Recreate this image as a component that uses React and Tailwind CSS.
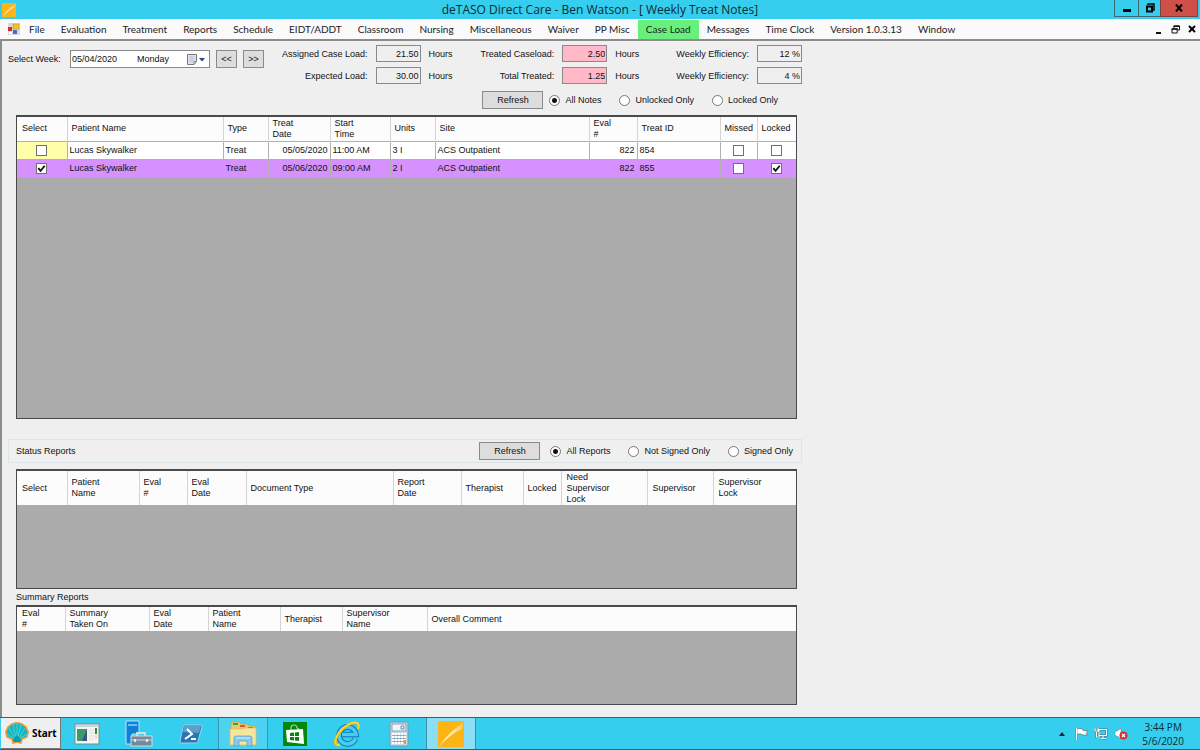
import { useState } from "react";

const menuItems = [
  "File",
  "Evaluation",
  "Treatment",
  "Reports",
  "Schedule",
  "EIDT/ADDT",
  "Classroom",
  "Nursing",
  "Miscellaneous",
  "Waiver",
  "PP Misc",
  "Case Load",
  "Messages",
  "Time Clock",
  "Version 1.0.3.13",
  "Window",
];

const treatColumns = [
  { label: "Select", width: 50 },
  { label: "Patient Name", width: 156 },
  { label: "Type", width: 45 },
  { label: "Treat\nDate", width: 62 },
  { label: "Start\nTime", width: 60 },
  { label: "Units", width: 45 },
  { label: "Site", width: 154 },
  { label: "Eval\n#", width: 48 },
  { label: "Treat ID", width: 83 },
  { label: "Missed", width: 37 },
  { label: "Locked", width: 39 },
];

const statusColumns = [
  { label: "Select", width: 50 },
  { label: "Patient\nName", width: 72 },
  { label: "Eval\n#", width: 48 },
  { label: "Eval\nDate", width: 59 },
  { label: "Document Type", width: 147 },
  { label: "Report\nDate", width: 68 },
  { label: "Therapist", width: 62 },
  { label: "Locked", width: 39 },
  { label: "Need\nSupervisor\nLock", width: 86 },
  { label: "Supervisor", width: 66 },
  { label: "Supervisor\nLock", width: 82 },
];

const summaryColumns = [
  { label: "Eval\n#", width: 48 },
  { label: "Summary\nTaken On", width: 84 },
  { label: "Eval\nDate", width: 59 },
  { label: "Patient\nName", width: 72 },
  { label: "Therapist", width: 62 },
  { label: "Supervisor\nName", width: 85 },
  { label: "Overall Comment", width: 369 },
];

const treatNotes = [
  { name: "Lucas Skywalker", date: "05/05/2020", time: "11:00 AM", units: "3 I", evalNo: 822, id: 854, selected: false, locked: false },
  { name: "Lucas Skywalker", date: "05/06/2020", time: "09:00 AM", units: "2 I", evalNo: 822, id: 855, selected: true, locked: true },
];

function OrangeLogo({ className }) {
  return (
    <svg viewBox="0 0 26 26" className={className}>
      <defs>
        <linearGradient id="streak" x1="0" y1="1" x2="1" y2="0">
          <stop offset="0" stopColor="#fff" />
          <stop offset="0.5" stopColor="#ffeab8" />
          <stop offset="1" stopColor="#fdc752" />
        </linearGradient>
      </defs>
      <rect width="26" height="26" fill="#fdb515" />
      <path d="M1 25C7 17 15 8 25 2l-1 6C15 12 8 18 1 25Z" fill="url(#streak)" />
    </svg>
  );
}

function Check({ label, defaultChecked }) {
  return (
    <span className="relative mx-auto block size-[11px]">
      <input
        type="checkbox"
        aria-label={label}
        defaultChecked={defaultChecked}
        className="peer block size-[11px] appearance-none border border-[#707070] bg-white"
      />
      <svg viewBox="0 0 12 12" className="pointer-events-none absolute inset-0 hidden size-[11px] peer-checked:block">
        <path d="M2.5 5.5 5 8.5 9.5 3" fill="none" stroke="#111" strokeWidth="2" />
      </svg>
    </span>
  );
}

function Radio({ name, label, value, onChange }) {
  return (
    <label className="flex items-center gap-[5px] whitespace-nowrap">
      <input
        type="radio"
        name={name}
        checked={value === label}
        onChange={() => onChange(label)}
        className="size-[11px] appearance-none rounded-full border border-[#777] bg-white checked:bg-[radial-gradient(circle,#111_2px,#fff_3px)]"
      />
      {label}
    </label>
  );
}

function RefreshButton() {
  return (
    <button className="h-[18px] w-[61px] border border-[#8a8a8a] bg-[#dddddd]">Refresh</button>
  );
}

function Stat({ id, label, value, unit, pink }) {
  return (
    <>
      <label htmlFor={id} className="pr-2 text-right whitespace-nowrap">{label}</label>
      <input
        id={id}
        readOnly
        value={value}
        className={`h-[17px] w-[45px] border border-[#8a8a8a] pr-px text-right ${pink ? "bg-[#ffb9c9]" : "bg-[#efefef]"}`}
      />
      {unit && <span className="pl-2">{unit}</span>}
    </>
  );
}

function DataGrid({ label, columns, headerClass, className, children }) {
  return (
    <div className={`border border-[#4a4a4a] border-t-2 bg-[#ababab] ${className}`}>
      <table aria-label={label} className="w-full table-fixed border-collapse">
        <colgroup>
          {columns.map((col, i) => (
            <col key={i} style={{ width: `${(col.width / 779) * 100}%` }} />
          ))}
        </colgroup>
        <thead>
          <tr className={`bg-[#fcfcfc] ${headerClass}`}>
            {columns.map((col, i) => (
              <th
                key={i}
                className="border-r border-[#d4d4d4] py-0 pr-0 pl-1 text-left align-middle font-normal whitespace-pre leading-[11px] first:pl-[5px] last:border-r-0"
              >
                {col.label}
              </th>
            ))}
          </tr>
        </thead>
        {children}
      </table>
    </div>
  );
}

function TitleBar() {
  return (
    <header className="flex h-[19px] items-start bg-[#35ceef]">
      <div className="flex flex-1 pt-[3px] pl-0.5">
        <OrangeLogo className="size-[14px]" />
      </div>
      <h1 className="font-['Open_Sans',sans-serif] text-[12px] leading-[19px] text-[#0d2a33]">
        deTASO Direct Care - Ben Watson - [ Weekly Treat Notes]
      </h1>
      <div className="flex flex-1 justify-end pr-0.5">
        <button aria-label="Minimize" className="flex h-[17px] w-[25px] items-center justify-center border border-t-0 border-[#3d6872]">
          <svg viewBox="0 0 10 10" className="size-[10px]"><path d="M1 6h8v3H1z" fill="#000" /></svg>
        </button>
        <button aria-label="Restore" className="flex h-[17px] w-[21px] items-center justify-center border-b border-[#3d6872]">
          <svg viewBox="0 0 10 10" className="size-[10px]">
            <path d="M3 2V1h6v6H8" fill="none" stroke="#000" strokeWidth="1.4" />
            <path d="M2 3.5h5v5H2z" fill="none" stroke="#000" strokeWidth="2" />
          </svg>
        </button>
        <button aria-label="Close" className="flex h-[17px] w-[38px] items-center justify-center border border-t-0 border-[#7c4242] bg-[#ce5049]">
          <svg viewBox="0 0 8 8" className="size-2"><path d="m1 .5 6 7M7 .5l-6 7" stroke="#000" strokeWidth="2" /></svg>
        </button>
      </div>
    </header>
  );
}

function MenuBar() {
  return (
    <nav className="flex h-[22px] items-center border-b-2 border-[#8c8c8c] bg-[#fafafa] font-['Lato',sans-serif] text-[10px] text-[#1b1b1b]">
      <svg viewBox="0 0 12 12" className="mr-px ml-2 size-3 shrink-0">
        <rect width="12" height="12" fill="#d8d8d8" />
        <rect x="0" y="4" width="4" height="4" fill="#d32f2a" />
        <rect x="5" y="1" width="6" height="5" fill="#f6c32c" stroke="#b88a16" strokeWidth=".5" />
        <rect x="5" y="7" width="4" height="4" fill="#3c71d0" />
        <path d="M1 9h3v2H1z" fill="#fff" />
      </svg>
      {menuItems.map((item) => (
        <button
          key={item}
          className={`h-[19px] px-2 whitespace-nowrap ${item === "Case Load" ? "bg-[#68f07d]" : ""}`}
        >
          {item}
        </button>
      ))}
      <div className="ml-auto flex items-center gap-2 pr-1">
        <button aria-label="Minimize child window">
          <svg viewBox="0 0 9 9" className="size-[9px]"><path d="M2 7h5v2H2z" fill="#111" /></svg>
        </button>
        <button aria-label="Restore child window">
          <svg viewBox="0 0 9 9" className="size-[9px]" fill="none" stroke="#111">
            <path d="M3 3V1h5.500v4H6.500" />
            <path d="M2.500 1.200h6M.7 4h6" strokeWidth="1.600" />
            <path d="M1 4h5.200v4H1z" />
          </svg>
        </button>
        <button aria-label="Close child window">
          <svg viewBox="0 0 8 8" className="size-2"><path d="m1 1 6 6M7 1 1 7" stroke="#000" strokeWidth="2" /></svg>
        </button>
      </div>
    </nav>
  );
}

function WeekPicker() {
  return (
    <div className="flex items-center">
      <label htmlFor="week" className="w-[62px] whitespace-nowrap">Select Week:</label>
      <div className="flex h-[18px] w-[140px] items-center border border-[#8a8a8a] bg-white">
        <input id="week" defaultValue="05/04/2020" className="h-4 w-[66px] pl-px" />
        <span className="flex-1">Monday</span>
        <button aria-label="Open calendar" className="pr-1">
          <svg viewBox="0 0 18 11" className="h-[11px] w-[18px]">
            <path d="M.5.5h9v7l-2.500 3H.5z" fill="#dfe3ee" stroke="#77787c" />
            <path d="M2 3h6M2 5h6M2 7h5M4 2v7M6 2v7" stroke="#b9c0d2" strokeWidth=".6" />
            <path d="M9.500 7.500H7v3" fill="none" stroke="#77787c" strokeWidth=".7" />
            <path d="M12 4h6l-3 3.500z" fill="#2c4880" />
          </svg>
        </button>
      </div>
      <button className="ml-1.5 h-[18px] w-[21px] border border-[#8a8a8a] bg-[#dddddd]">&lt;&lt;</button>
      <button className="ml-1.5 h-[18px] w-[21px] border border-[#8a8a8a] bg-[#dddddd]">&gt;&gt;</button>
    </div>
  );
}

function TaskIcon({ label, active, open, children }) {
  return (
    <button
      aria-label={label}
      className={`flex h-full w-[50px] items-center justify-center ${active ? "border-x border-[#3a8fa5] bg-[#8adff6]" : ""} ${open ? "border-x border-[#3498b1] bg-[#4dd2f1]" : ""}`}
    >
      {children}
    </button>
  );
}

function TaskBar() {
  return (
    <footer className="flex h-[33px] items-stretch border-y border-[#39616c] bg-[#35ceef]">
      <button className="mr-px ml-px flex w-[60px] items-center gap-[3px] border-r border-b border-[#777] bg-[#efefef] pl-1 font-['Noto_Sans',sans-serif] text-[10px] font-bold text-black">
        <svg viewBox="0 0 24 22" className="h-[22px] w-6">
          <path d="M8 21 7 17 2 15 .8 10 3 5l4-3 5-1.500L17 2l4 3 2.200 5L22 15l-5 2-1 4-4-1z" fill="#14b8c4" stroke="#ee9a35" strokeWidth="1.600" />
          <path d="M11 18 2 12M11 18 4 6M11.500 18 8 2M12 18V1M12.500 18 16 2M13 18 20 6M13 18l9-6" stroke="#63d9da" strokeWidth=".7" />
          <path d="m8 17 4-4 4 4-1 3H9z" fill="#079caf" />
        </svg>
        Start
      </button>
      <div className="flex gap-0.5">
        <TaskIcon label="Server view">
          <svg viewBox="0 0 26 22" className="h-[22px] w-[26px]">
            <rect x="1" y="1" width="24" height="20" fill="#f5f5f2" stroke="#7b8b92" />
            <path d="M1.500 2h23v2h-23z" fill="#cbd6da" />
            <rect x="3" y="6" width="10" height="12" fill="#35577f" />
            <path d="M3 6h10L8 18H3z" fill="#3c9a69" />
            <path d="M15 7h5M15 10h5M15 13h5M15 16h5" stroke="#dcdcdc" />
            <path d="M21 5h2v6h-2z" fill="#2a8a4a" />
            <path d="M21 12h2v4h-2z" fill="#dadada" />
          </svg>
        </TaskIcon>
        <TaskIcon label="Server Manager">
          <svg viewBox="0 0 28 28" className="size-7">
            <path d="M1 1h13v13H7v10H1z" fill="#0d80d8" stroke="#b8e6f6" />
            <path d="M3 5h9" stroke="#8fd0f4" strokeWidth="1.500" />
            <path d="M12 16v-3h8v3" fill="none" stroke="#d8dde0" strokeWidth="1.800" />
            <rect x="6" y="16" width="21" height="10" fill="#73899c" stroke="#d2dade" />
            <path d="M6 20h21" stroke="#d2dade" />
            <path d="M10 19v3M22 19v3" stroke="#fff" strokeWidth="1.500" />
          </svg>
        </TaskIcon>
        <TaskIcon label="PowerShell">
          <svg viewBox="0 0 24 20" className="h-5 w-6">
            <path d="M5 1h17q1.500 0 1 2l-4 14q-.5 2-2 2H2Q.500 19 1 17L4 3q.3-2 1-2Z" fill="#2777b2" stroke="#a7cfe4" />
            <path d="M5 2h17l-2 7-16-1z" fill="#5b9fce" />
            <path d="m8 5 5 5-7 5M12 15h5" fill="none" stroke="#fff" strokeWidth="2" />
          </svg>
        </TaskIcon>
        <TaskIcon label="File Explorer" open>
          <svg viewBox="0 0 28 26" className="h-[26px] w-7">
            <path d="M2 3q0-2 2-2h6l2 2h6l2 2h6v19H2z" fill="#e7ca6a" stroke="#c5a548" strokeWidth=".7" />
            <path d="M4 2h5v2H4z" fill="#37a343" />
            <path d="M11 4h5v2h-5z" fill="#db543e" />
            <path d="M19 6h5v2h-5z" fill="#2b84c8" />
            <path d="M1 8h13l2-1h11v17H1z" fill="#f8e59c" stroke="#d9bd63" strokeWidth=".7" />
            <path d="M5 25v-8q0-2 2-2h14q2 0 2 2v8h-5v-5h-8v5z" fill="#86c9e9" stroke="#579dc5" strokeWidth=".7" />
            <path d="M7 17h14" stroke="#d5f1fb" />
          </svg>
        </TaskIcon>
        <TaskIcon label="Store">
          <svg viewBox="0 0 26 26" className="size-[26px]">
            <rect x="1" y="1" width="24" height="24" fill="#05870e" />
            <path d="M9 9V7q0-3 3-3t3 3l2 1" fill="none" stroke="#9ad39e" strokeWidth="1.200" />
            <path d="m4 9 17-1 1 15-17-2z" fill="#fff" />
            <path d="m8 12 4-.5v3.500H8zm5-.6 4-.4v4h-4zM8 16h4v3.500L8 19zm5 0h4v4l-4-.4z" fill="#05870e" />
          </svg>
        </TaskIcon>
        <TaskIcon label="Internet Explorer">
          <svg viewBox="0 0 28 28" className="size-7" fill="none">
            <path d="M22.500 18.500A8.500 8.500 0 1 1 23 14.500H9" stroke="#0d78b7" strokeWidth="5.600" />
            <path d="M22.500 18.500A8.500 8.500 0 1 1 23 14.500H9" stroke="#4bcbf2" strokeWidth="3.600" />
            <path d="M7 24.500C1 27 1 20 6 13S20 1 24 3c2 1 2 3 1 6" stroke="#d9a514" strokeWidth="2.800" />
            <path d="M7 24.500C1 27 1 20 6 13S20 1 24 3c2 1 2 3 1 6" stroke="#ffd32e" strokeWidth="2" />
          </svg>
        </TaskIcon>
        <TaskIcon label="Calculator">
          <svg viewBox="0 0 20 26" className="h-[26px] w-5">
            <rect x="1" y="1" width="18" height="24" rx="1" fill="#c9dbea" stroke="#7895ab" />
            <rect x="3" y="3" width="14" height="7" fill="#eef7fc" stroke="#718eaa" strokeWidth=".8" />
            <path d="M12 5h3v3h-3z" fill="none" stroke="#638eac" />
            <path d="M3 13h14M3 16h14M3 19h14M3 22h14" stroke="#fff" strokeWidth="2" strokeDasharray="2 1" />
            <path d="M3 14.500h14M3 17.500h14M3 20.500h14" stroke="#7895ab" strokeWidth=".7" />
            <path d="M15 19h2v4h-2z" fill="#e99533" />
          </svg>
        </TaskIcon>
        <TaskIcon label="deTASO" active>
          <OrangeLogo className="size-[26px]" />
        </TaskIcon>
      </div>
      <div className="ml-auto flex items-center gap-1.5 pr-4">
        <svg viewBox="0 0 6 4" className="mr-1 h-1 w-1.5"><path d="m0 4 3-4 3 4z" fill="#10272e" /></svg>
        <svg viewBox="0 0 13 13" className="size-[13px]">
          <path d="M1.500 1v12" stroke="#4b7884" strokeWidth="2.600" />
          <path d="M2 1.500h5l1 2h4.500l-1 2 1 2.500H7.500l-1-1H2z" fill="#fff" stroke="#4b7884" strokeWidth=".7" />
          <path d="M1.500 1v12" stroke="#fff" strokeWidth="1.400" />
        </svg>
        <svg viewBox="0 0 14 13" className="h-[13px] w-3.5" fill="none">
          <path d="M5 2.500h7.500v6H5zM7 11.500h5M9 9v2M2.500 5v5H6M1 1v3h3V1" stroke="#46727e" strokeWidth="2.200" />
          <path d="M5 2.500h7.500v6H5zM7 11.500h5M9 9v2M2.500 5v5H6M1 1v3h3V1" stroke="#fff" strokeWidth="1.100" />
        </svg>
        <svg viewBox="0 0 14 13" className="h-[13px] w-3.5">
          <path d="M1 4h2l4-3v11L3 9H1z" fill="#fff" stroke="#6a8b94" strokeWidth=".7" />
          <circle cx="9.500" cy="8.500" r="4" fill="#e12d2d" />
          <path d="m8 7 3 3M11 7l-3 3" stroke="#fff" strokeWidth="1.200" />
        </svg>
        <div className="ml-2 text-center font-['Open_Sans',sans-serif] text-[10px] leading-[14px] text-[#0d2a33]">
          <div>3:44 PM</div>
          <div>5/6/2020</div>
        </div>
      </div>
    </footer>
  );
}

export default function App() {
  const [notesFilter, setNotesFilter] = useState("All Notes");
  const [reportsFilter, setReportsFilter] = useState("All Reports");

  return (
    <div className="flex min-h-screen flex-col bg-[#efefef] font-['Liberation_Sans',sans-serif] text-[9px] leading-[12px] text-[#111]">
      <TitleBar />
      <MenuBar />

      <main className="flex-1 border-l-2 border-[#8c8c8c] pt-1 pb-3">
        <div className="max-w-[800px] pl-1.5">
          <div className="flex items-start justify-between">
            <div className="pt-[5px]">
              <WeekPicker />
            </div>
            <div className="grid grid-cols-[auto_45px_60px_auto_45px_69px_auto_45px] items-center gap-y-[5px]">
              <Stat id="assigned" label="Assigned Case Load:" value="21.50" unit="Hours" />
              <Stat id="treated" label="Treated Caseload:" value="2.50" unit="Hours" pink />
              <Stat id="efficiency" label="Weekly Efficiency:" value="12 %" />
              <Stat id="expected" label="Expected Load:" value="30.00" unit="Hours" />
              <Stat id="total" label="Total Treated:" value="1.25" unit="Hours" pink />
              <Stat id="total-efficiency" label="Weekly Efficiency:" value="4 %" />
            </div>
          </div>

          <div className="mt-[7px] mr-6 flex items-center justify-end">
            <RefreshButton />
            <div className="ml-1.5 flex gap-[18px]">
              <Radio name="notes" label="All Notes" value={notesFilter} onChange={setNotesFilter} />
              <Radio name="notes" label="Unlocked Only" value={notesFilter} onChange={setNotesFilter} />
              <Radio name="notes" label="Locked Only" value={notesFilter} onChange={setNotesFilter} />
            </div>
          </div>

          <div className="mt-1.5 mr-[5px] ml-2">
            <DataGrid label="Treat notes" columns={treatColumns} headerClass="h-6" className="min-h-[304px]">
              <tbody>
                {treatNotes.map((note) => (
                  <tr
                    key={note.id}
                    className={`h-[18px] [&>td]:border [&>td]:border-[#b0b0b0] [&>td]:px-0.5 [&>td]:py-0 [&>td:first-child]:border-l-0 [&>td:last-child]:border-r-0 ${note.selected ? "bg-[#d592ff]" : "bg-white"}`}
                  >
                    <td className={note.selected ? "" : "bg-[#ffffaa]"}>
                      <Check label={`Select ${note.id}`} defaultChecked={note.selected} />
                    </td>
                    <td>{note.name}</td>
                    <td>Treat</td>
                    <td className="text-right">{note.date}</td>
                    <td>{note.time}</td>
                    <td>{note.units}</td>
                    <td>ACS Outpatient</td>
                    <td className="text-right">{note.evalNo}</td>
                    <td>{note.id}</td>
                    <td><Check label={`Missed ${note.id}`} /></td>
                    <td><Check label={`Locked ${note.id}`} defaultChecked={note.locked} /></td>
                  </tr>
                ))}
              </tbody>
            </DataGrid>
          </div>

          <section className="mt-5 flex h-6 items-center justify-between border border-[#dbe5ea] pr-2 pl-[7px]">
            <h2>Status Reports</h2>
            <div className="flex items-center">
              <RefreshButton />
              <div className="ml-2.5 flex gap-[18px]">
                <Radio name="reports" label="All Reports" value={reportsFilter} onChange={setReportsFilter} />
                <Radio name="reports" label="Not Signed Only" value={reportsFilter} onChange={setReportsFilter} />
                <Radio name="reports" label="Signed Only" value={reportsFilter} onChange={setReportsFilter} />
              </div>
            </div>
          </section>

          <div className="mt-1.5 mr-[5px] ml-2">
            <DataGrid label="Status reports" columns={statusColumns} headerClass="h-[34px]" className="min-h-[120px]" />
            <h2 className="mt-0.5 mb-0.5">Summary Reports</h2>
            <DataGrid label="Summary reports" columns={summaryColumns} headerClass="h-6" className="min-h-[100px]" />
          </div>
        </div>
      </main>

      <TaskBar />
    </div>
  );
}
